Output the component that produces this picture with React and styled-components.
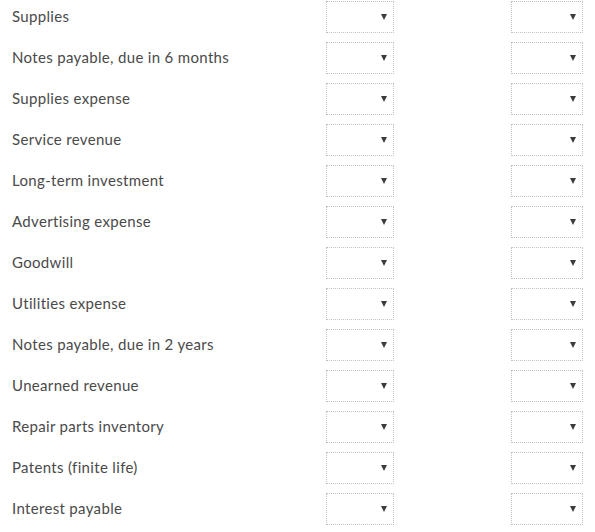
import React from "react";
import styled, { createGlobalStyle } from "styled-components";

const Global = createGlobalStyle`
  html, body { margin: 0; padding: 0; background: #fff; }
  body { font-family: Lato, "Open Sans", sans-serif; }
`;

const List = styled.div`
  display: flex;
  flex-direction: column;
  gap: 9px;
  padding: 1px 0 0 12px;
`;

const Row = styled.div`
  display: grid;
  grid-template-columns: 314px 68px 117px 72px;
  align-items: center;
  height: 32px;
`;

const Label = styled.span`
  font-size: 15px;
  font-weight: 400;
  letter-spacing: 0.33px;
  color: #4a4a4a;
  white-space: nowrap;
  line-height: 1;
  padding-bottom: 1px;
`;

const Select = styled.div`
  grid-column: ${(p) => p.col};
  box-sizing: border-box;
  height: 32px;
  border: 1px dotted #c2c2c2;
  background: #fff;
  display: flex;
  align-items: center;
  justify-content: flex-end;
  padding-right: 6px;
  padding-bottom: 1px;
`;

const Arrow = styled.span`
  width: 0;
  height: 0;
  border-left: 3.5px solid transparent;
  border-right: 3.5px solid transparent;
  border-top: 6px solid #3c3c3c;
`;

const items = [
  "Supplies",
  "Notes payable, due in 6 months",
  "Supplies expense",
  "Service revenue",
  "Long-term investment",
  "Advertising expense",
  "Goodwill",
  "Utilities expense",
  "Notes payable, due in 2 years",
  "Unearned revenue",
  "Repair parts inventory",
  "Patents (finite life)",
  "Interest payable",
];

export default function App() {
  return (
    <>
      <Global />
      <List>
        {items.map((t) => (
          <Row key={t}>
            <Label>{t}</Label>
            <Select col={2}><Arrow /></Select>
            <Select col={4}><Arrow /></Select>
          </Row>
        ))}
      </List>
    </>
  );
}
